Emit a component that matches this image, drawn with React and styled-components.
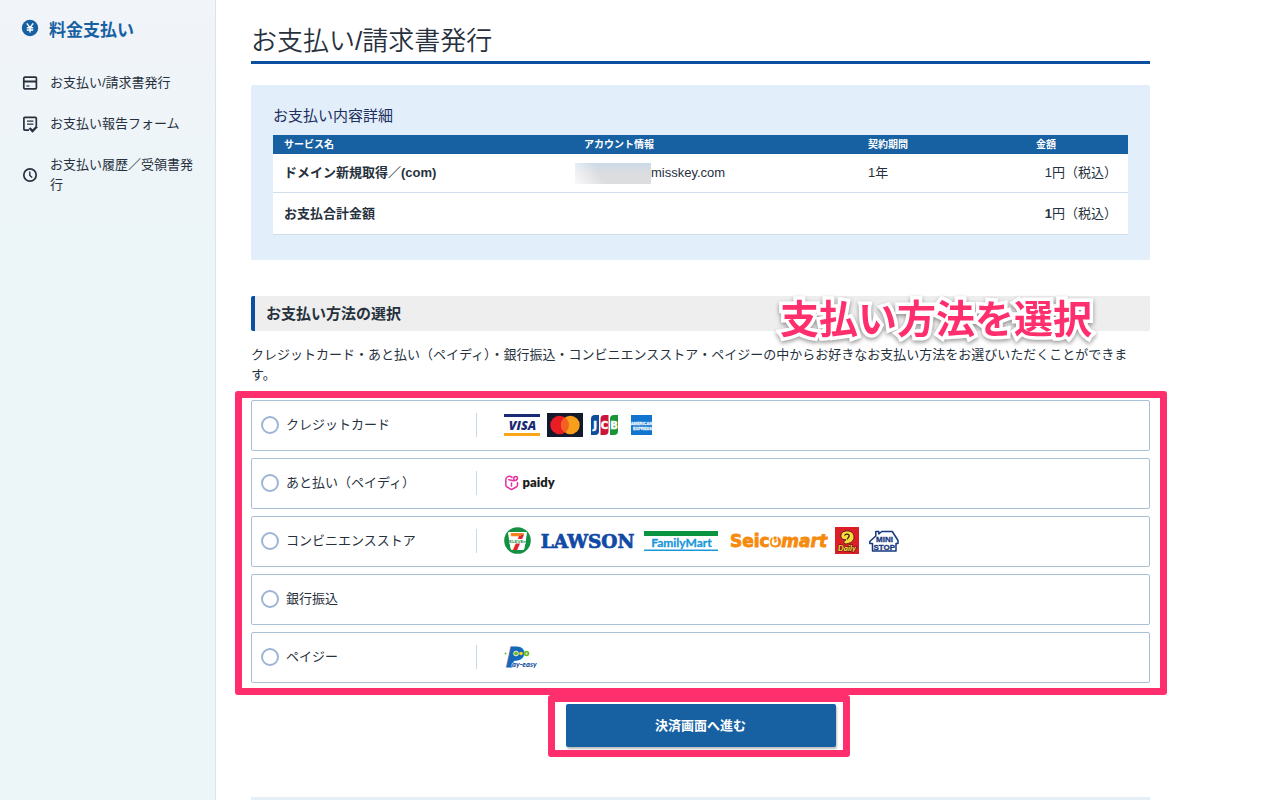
import React, { useState } from "react"
import styled, { createGlobalStyle } from "styled-components"

const colors = {
  text: "#27313d",
  blue: "#1761a3",
  deepBlue: "#0a4fa0",
  pink: "#ff2f6e",
  line: "#a9c0d9",
}

const GlobalStyle = createGlobalStyle`
  * {
    box-sizing: border-box;
  }
  body {
    margin: 0;
    background: #fff;
    color: ${colors.text};
    font-family: "Liberation Sans", "Noto Sans CJK JP", sans-serif;
    font-size: 13px;
    line-height: 20px;
  }
`;

const Page = styled.div`
  display: flex;
  min-height: 100vh;
`;

const Sidebar = styled.aside`
  flex: 0 0 216px;
  padding: 19px 20px 0 21px;
  background: linear-gradient(#f1f4f9, #ecf5f8 240px);
  border-right: 1px solid #dbe4ea;
`;

const SidebarTitle = styled.h2`
  display: flex;
  align-items: flex-start;
  gap: 10px;
  margin: 0 0 30px;
  color: ${colors.blue};
  font-size: 17px;
  line-height: 24px;
`;

const Menu = styled.ul`
  display: flex;
  flex-direction: column;
  gap: 21px;
  margin: 0;
  padding: 0 0 0 1px;
  list-style: none;
`;

const MenuLink = styled.a`
  display: flex;
  align-items: center;
  gap: 12px;
  color: ${colors.text};
  text-decoration: none;
  svg {
    flex: none;
  }
`;

const Main = styled.main`
  flex: 1;
  max-width: 934px;
  padding: 25px 0 0 35px;
`;

const PageTitle = styled.h1`
  margin: 0 0 21px;
  padding-bottom: 4px;
  border-bottom: 3px solid ${colors.deepBlue};
  font-size: 26px;
  font-weight: 350;
  line-height: 32px;
`;

const DetailPanel = styled.section`
  margin-bottom: 36px;
  padding: 21px 22px 25px;
  background: #e3eefb;
  border-radius: 2px;
`;

const DetailTitle = styled.h2`
  margin: 0 0 9px;
  color: #1d2f5c;
  font-size: 15px;
  font-weight: 400;
  line-height: 20px;
`;

const Table = styled.table`
  width: 100%;
  table-layout: fixed;
  border-collapse: separate;
  border-spacing: 0;
  background: #fff;
`;

const HeadCell = styled.th`
  width: ${props => props.$width || "auto"};
  height: 19px;
  padding: 0 11px;
  background: ${colors.blue};
  color: #fff;
  font-size: 10px;
  line-height: 19px;
  text-align: left;
`;

const Cell = styled.td`
  height: ${props => props.$total ? "42px" : "39px"};
  padding: 0 11px 0 ${props => props.$masked ? "2px" : "11px"};
  border-bottom: 1px solid #cfdeec;
  font-weight: ${props => props.$bold ? 700 : 400};
  text-align: ${props => props.$right ? "right" : "left"};
`;

const Account = styled.div`
  display: flex;
  align-items: center;
`;

const Mask = styled.span`
  width: 76px;
  height: 21px;
  background:
    linear-gradient(60deg, rgba(255, 255, 255, 0.8), rgba(255, 255, 255, 0) 35%),
    linear-gradient(#cbdbe9, #d9dce0 40%, #dededf);
`;

const SectionTitle = styled.h2`
  position: relative;
  margin: 0 0 14px;
  padding: 0 11px;
  border-left: 4px solid ${colors.deepBlue};
  border-radius: 2px;
  background: #eee;
  font-size: 15px;
  line-height: 35px;
`;

const Callout = styled.span`
  position: absolute;
  top: 0;
  right: 58px;
  color: ${colors.pink};
  font-size: 39px;
  line-height: 48px;
  white-space: nowrap;
  -webkit-text-stroke: 7px #fff;
  paint-order: stroke fill;
  filter: drop-shadow(0 2px 2px rgba(0, 0, 0, 0.4));
`;

const Lead = styled.p`
  margin: 0 0 15px;
`;

const Options = styled.div`
  position: relative;
  display: flex;
  flex-direction: column;
  gap: 7px;
  margin-bottom: 21px;
`;

const Highlight = styled.div`
  position: absolute;
  inset: ${props => props.$inset};
  border: 7px solid ${colors.pink};
  border-radius: 3px;
  pointer-events: none;
`;

const Option = styled.label`
  display: flex;
  align-items: center;
  height: 51px;
  padding: 0 0 2px 9px;
  border: 1px solid ${colors.line};
  border-radius: 2px;
  cursor: pointer;
`;

const Radio = styled.input`
  appearance: none;
  width: 18px;
  height: 18px;
  margin: 0 7px 0 0;
  border: 2px solid #9db5d5;
  border-radius: 50%;
  background: #fff;
  &:checked {
    background: radial-gradient(${colors.blue} 4px, #fff 5px);
  }
`;

const OptionName = styled.span`
  width: 190px;
`;

const Logos = styled.span`
  display: flex;
  align-items: center;
  gap: ${props => props.$gap};
  height: 24px;
  padding-left: 27px;
  border-left: 1px solid #c9d9e8;
  svg {
    flex: none;
    overflow: visible;
  }
`;

const SubmitArea = styled.div`
  position: relative;
  width: 270px;
  margin: 0 auto 50px;
`;

const SubmitButton = styled.button`
  display: block;
  width: 100%;
  height: 43px;
  padding: 0 0 3px;
  border: 0;
  border-radius: 2px;
  background: ${colors.blue};
  box-shadow: 1px 2px 2px rgba(0, 0, 0, 0.25);
  color: #fff;
  font-family: inherit;
  font-size: 13px;
  font-weight: 700;
  cursor: pointer;
`;

const Divider = styled.hr`
  height: 3px;
  margin: 0;
  border: 0;
  background: #e6eff6;
`;

const YenIcon = () => (
  <svg width="18" height="18" viewBox="0 0 18 18" fill="none">
    <circle cx="9" cy="9" r="8.2" fill={colors.blue} />
    <path d="M5.8 4.4 9 8.600l3.200-4.200M9 8.600v5M5.800 8.800h6.400M5.800 11h6.400" stroke="#fff" strokeWidth="1.400" />
  </svg>
)

const CardIcon = () => (
  <svg width="16" height="16" viewBox="0 0 16 16" fill="none" stroke={colors.text} strokeWidth="1.7">
    <rect x="1.800" y="2.200" width="12.600" height="11.600" rx="1" />
    <path d="M2 6.500h12.400" strokeWidth="2" />
    <path d="M4.400 11h3" strokeWidth="1.200" />
  </svg>
)

const ReportIcon = () => (
  <svg width="16" height="18" viewBox="0 0 16 18" fill="none" stroke={colors.text} strokeWidth="1.700">
    <path d="M7 15.200H2.800a.9.9 0 0 1-.9-.9V3.200a.9.9 0 0 1 .9-.9h10.600a.9.9 0 0 1 .9.9v8" />
    <path d="M5 6.200h6.400M5 9.200h6.400" strokeWidth="1.200" />
    <path d="m7.500 13 3 3 4.500-4.500" strokeWidth="2.400" />
  </svg>
)

const ClockIcon = () => (
  <svg width="16" height="16" viewBox="0 0 16 16" fill="none" stroke={colors.text} strokeWidth="1.700">
    <circle cx="8" cy="8" r="6.200" />
    <path d="M7.800 4.400v4l2.400 2.200" strokeWidth="1.400" />
  </svg>
)

const Visa = () => (
  <svg width="36" height="24" viewBox="0 0 36 24">
    <rect width="36" height="3" y="1" fill="#1b2a74" />
    <rect width="36" height="3" y="20" fill="#f9a51a" />
    <text x="18.500" y="16.500" textAnchor="middle" fontFamily="Open Sans" fontWeight="800" fontStyle="italic" fontSize="12.500" fill="#1b2a74">VISA</text>
  </svg>
)

const Mastercard = () => (
  <svg width="36" height="24" viewBox="0 0 36 24">
    <rect width="36" height="24" fill="#141a2b" />
    <circle cx="12.600" cy="12" r="9.300" fill="#ea1c24" />
    <circle cx="23.400" cy="12" r="9.300" fill="#f79e1b" />
    <path d="M18 4.400a9.300 9.300 0 0 1 0 15.200 9.300 9.300 0 0 1 0-15.200z" fill="#f26122" />
  </svg>
)

const Jcb = () => (
  <svg width="32" height="24" viewBox="0 0 32 24">
    <path d="M5 2h4v16a4 4 0 0 1-4 4H1V6a4 4 0 0 1 4-4z" fill="#0e4c9c" />
    <path d="M14.500 2h4v16a4 4 0 0 1-4 4h-4V6a4 4 0 0 1 4-4z" fill="#c9163a" />
    <path d="M24 2h4v16a4 4 0 0 1-4 4h-4V6a4 4 0 0 1 4-4z" fill="#1a9437" />
    <g fontFamily="DejaVu Sans" fontWeight="700" fontSize="10" fill="#fff" stroke="#fff" strokeWidth="0.500" textAnchor="middle">
      <text x="5" y="15.500">J</text>
      <text x="14.300" y="15.500">C</text>
      <text x="24" y="15.500">B</text>
    </g>
  </svg>
)

const Amex = () => (
  <svg width="24" height="24" viewBox="0 0 24 24">
    <rect x="2" y="2" width="21" height="20" fill="#1274cd" />
    <g fontFamily="Liberation Sans" fontWeight="700" fontSize="4" fill="#e6f2fc" stroke="#e6f2fc" strokeWidth="0.300" textAnchor="middle">
      <text x="12.500" y="11.500">AMERICAN</text>
      <text x="13.500" y="16.500">EXPRESS</text>
    </g>
  </svg>
)

const Paidy = () => (
  <svg width="52" height="24" viewBox="0 0 52 24">
    <g fill="none" stroke="#e62fa0" strokeWidth="1.500" strokeLinecap="round" strokeLinejoin="round">
      <path d="M8 6.400C6.500 5 4.500 5 3.200 6 2 7 1.800 8 1.800 9v5c0 1 .4 1.500 1.200 2l4.500 2.600 4.700-2.600c.9-.5 1.300-1.100 1.300-2v-2.500" />
      <path d="M4.800 8.800c2.200 0 3.200.9 4.700.9 1.200 0 3.700-.3 4-2.300.2-1.500-1.300-2.300-2.800-1.700-1.300.6-1.200 2.300-.4 3.200" />
      <path d="M7.500 12v3" />
    </g>
    <text x="18.500" y="16" fontFamily="Lato" fontWeight="800" fontSize="13" fill="#1c1c20">paidy</text>
  </svg>
)

const SevenEleven = () => (
  <svg width="27" height="27" viewBox="0 0 27 27">
    <defs>
      <linearGradient id="seven" x1="0" y1="0" x2="0.25" y2="1">
        <stop offset="0.420" stopColor="#f5821f" />
        <stop offset="0.420" stopColor="#e3242b" />
      </linearGradient>
    </defs>
    <circle cx="13.500" cy="13.500" r="13.300" fill="#149044" />
    <path d="M5 5h17a1 1 0 0 1 1 1l-2.500 15.500a2 2 0 0 1-2 1.500h-10a2 2 0 0 1-2-1.500L4 6a1 1 0 0 1 1-1z" fill="#fff" />
    <text x="13.500" y="22.500" textAnchor="middle" fontFamily="DejaVu Sans" fontWeight="700" fontSize="23" fill="url(#seven)">7</text>
    <rect x="5" y="12" width="17" height="4.500" fill="#fff" />
    <text x="13.500" y="16" textAnchor="middle" fontFamily="Liberation Sans" fontWeight="700" fontSize="4.400" fill="#149044">ELEVEn</text>
  </svg>
)

const Lawson = () => (
  <svg width="93" height="24" viewBox="0 0 93 24">
    <text x="46.500" y="18.500" textAnchor="middle" fontFamily="DejaVu Serif" fontWeight="700" fontSize="18.500" fill="#1149a6" stroke="#1149a6" strokeWidth="0.700">LAWSON</text>
  </svg>
)

const FamilyMart = () => (
  <svg width="74" height="24" viewBox="0 0 74 24">
    <rect y="2" width="74" height="5" fill="#0a9440" />
    <text x="37.500" y="18" textAnchor="middle" fontFamily="Lato" fontWeight="700" fontSize="12" fill="#1c97dc" stroke="#1c97dc" strokeWidth="0.300">FamilyMart</text>
    <rect y="20.500" width="74" height="1.500" fill="#1c97dc" />
  </svg>
)

const Seicomart = () => (
  <svg width="97" height="24" viewBox="0 0 97 24">
    <text x="2" y="18" fontFamily="DejaVu Sans" fontWeight="700" fontSize="17" fill="#f68a0c" stroke="#f68a0c" strokeWidth="0.800">
      Seico<tspan fontStyle="italic">mart</tspan>
    </text>
    <circle cx="47" cy="13.300" r="3.300" fill="#fff" />
    <path d="M45 7v4.500M49 7v4.500" stroke="#fff" strokeWidth="1" />
    <path d="M47 8.500v4.500l2-1.500" fill="none" stroke="#f68a0c" strokeWidth="1.300" />
  </svg>
)

const Daily = () => (
  <svg width="24" height="27" viewBox="0 0 24 27">
    <rect width="24" height="27" fill="#dc1f26" />
    <path d="M6 9.500C5.500 5.500 9 4 12.500 4c4 0 6.500 2.600 6.500 6 0 4.200-3.600 6.500-9 7l-1.500-2 2.500-2.200C8 12.800 6.300 11.800 6 9.500z" fill="#f9dd3c" stroke="#3b1717" strokeWidth="0.800" />
    <path d="M9.500 8.500c1-1.800 4.500-1.800 4.700.3.100 1.500-1.700 2-2 3.700" fill="none" stroke="#3b1717" strokeWidth="1.300" />
    <text x="12" y="24" textAnchor="middle" fontFamily="Lato" fontWeight="900" fontStyle="italic" fontSize="8" fill="#f9dd3c" stroke="#3b1717" strokeWidth="1" paintOrder="stroke">Daily</text>
  </svg>
)

const Ministop = () => (
  <svg width="30" height="24" viewBox="0 0 30 24">
    <path d="M3.500 22v-7.500H.8v-2l6-5.500V2.500h3V5l3-2.500h10.500L29 11.500v3h-2V22z" fill="#fff" stroke="#16387f" strokeWidth="1.500" strokeLinejoin="round" />
    <g fontFamily="Liberation Sans" fontWeight="700" fill="#16387f" stroke="#16387f" strokeWidth="0.300" textAnchor="middle">
      <text x="15.500" y="12.500" fontSize="8">MINI</text>
      <text x="15.300" y="20.500" fontSize="8">STOP</text>
    </g>
  </svg>
)

const PayEasy = () => (
  <svg width="34" height="26" viewBox="0 0 34 26">
    <text x="2" y="23" fontFamily="Open Sans" fontWeight="800" fontStyle="italic" fontSize="29" fill="#1667b7" stroke="#1667b7" strokeWidth="0.800">P</text>
    <circle cx="1.500" cy="9.500" r="1" fill="#6cbd2b" />
    <circle cx="12" cy="9.500" r="2.400" fill="#6cbd2b" stroke="#fff" strokeWidth="0.800" />
    <circle cx="17" cy="9.500" r="1.800" fill="#f5d21a" />
    <circle cx="22.500" cy="9.500" r="2.800" fill="#6cbd2b" />
    <circle cx="22.500" cy="9.500" r="1" fill="#e7f3d4" />
    <text x="8" y="23" fontFamily="Lato" fontWeight="900" fontStyle="italic" fontSize="7.500" fill="#14509e" stroke="#fff" strokeWidth="1.200" paintOrder="stroke">ay-easy</text>
  </svg>
)

const menu = [
  {id: 1, name: "お支払い/請求書発行", icon: <CardIcon />},
  {id: 2, name: "お支払い報告フォーム", icon: <ReportIcon />},
  {id: 3, name: "お支払い履歴／受領書発行", icon: <ClockIcon />}
]

const methods = [
  {id: "card", name: "クレジットカード", gap: "7px", logos: <><Visa /><Mastercard /><Jcb /><Amex /></>},
  {id: "paidy", name: "あと払い（ペイディ）", logos: <Paidy />},
  {id: "store", name: "コンビニエンスストア", gap: "10px", logos: <><SevenEleven /><Lawson /><FamilyMart /><Seicomart /><Daily /><Ministop /></>},
  {id: "bank", name: "銀行振込"},
  {id: "payeasy", name: "ペイジー", logos: <PayEasy />}
]

const App = () => {
  const [method, setMethod] = useState("")

  return (
    <>
      <GlobalStyle />
      <Page>
        <Sidebar>
          <SidebarTitle><YenIcon />料金支払い</SidebarTitle>
          <nav>
            <Menu>
              {menu.map(item => (
                <li key={item.id}>
                  <MenuLink href="#">{item.icon}<span>{item.name}</span></MenuLink>
                </li>
              ))}
            </Menu>
          </nav>
        </Sidebar>
        <Main>
          <PageTitle>お支払い/請求書発行</PageTitle>
          <DetailPanel>
            <DetailTitle>お支払い内容詳細</DetailTitle>
            <Table>
              <thead>
                <tr>
                  <HeadCell>サービス名</HeadCell>
                  <HeadCell $width="284px">アカウント情報</HeadCell>
                  <HeadCell $width="168px">契約期間</HeadCell>
                  <HeadCell $width="103px">金額</HeadCell>
                </tr>
              </thead>
              <tbody>
                <tr>
                  <Cell $bold>ドメイン新規取得／(com)</Cell>
                  <Cell $masked><Account><Mask />misskey.com</Account></Cell>
                  <Cell>1年</Cell>
                  <Cell $right>1円（税込）</Cell>
                </tr>
                <tr>
                  <Cell $total $bold colSpan={3}>お支払合計金額</Cell>
                  <Cell $total $right><b>1</b>円（税込）</Cell>
                </tr>
              </tbody>
            </Table>
          </DetailPanel>
          <SectionTitle>
            お支払い方法の選択
            <Callout>支払い方法を選択</Callout>
          </SectionTitle>
          <Lead>
            クレジットカード・あと払い（ペイディ）・銀行振込・コンビニエンスストア・ペイジーの中からお好きなお支払い方法をお選びいただくことができます。
          </Lead>
          <Options role="radiogroup" aria-label="お支払い方法の選択">
            {methods.map(item => (
              <Option key={item.id}>
                <Radio
                  type="radio"
                  name="method"
                  value={item.id}
                  checked={method === item.id}
                  onChange={() => setMethod(item.id)}
                />
                <OptionName>{item.name}</OptionName>
                {item.logos && <Logos $gap={item.gap}>{item.logos}</Logos>}
              </Option>
            ))}
            <Highlight $inset="-9px -17px -12px -16px" />
          </Options>
          <SubmitArea>
            <SubmitButton type="button">決済画面へ進む</SubmitButton>
            <Highlight $inset="-9px -14px -10px -18px" />
          </SubmitArea>
          <Divider />
        </Main>
      </Page>
    </>
  )
}

export default App;
